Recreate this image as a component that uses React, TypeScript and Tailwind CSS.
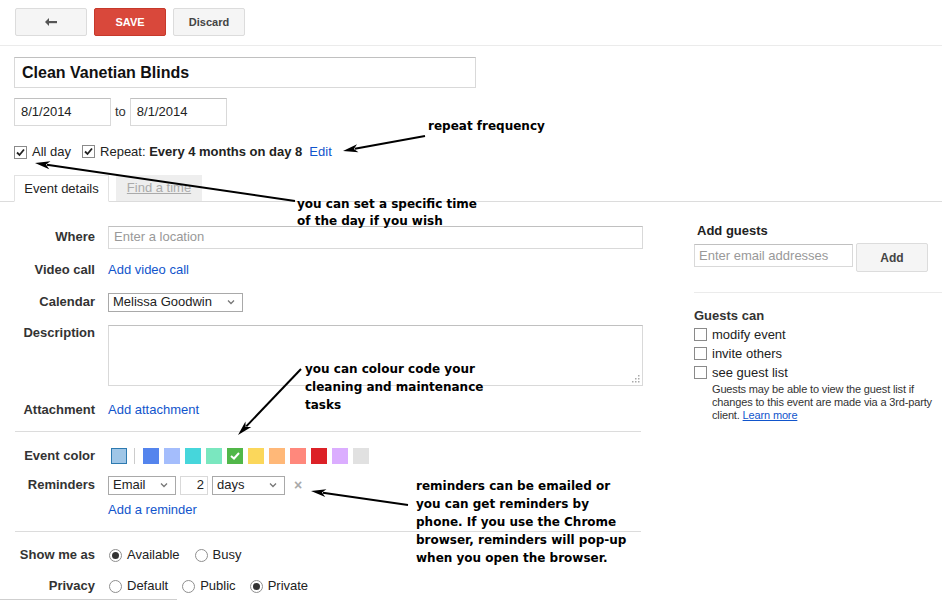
import React from "react";

const FONT = "font-['Liberation_Sans',Arial,sans-serif]";
const NOTE = "absolute font-['DejaVu_Sans',Verdana,sans-serif] font-bold text-[12px] text-black whitespace-nowrap";

const swatches = [
  "#5484ed",
  "#a4bdfc",
  "#46d6db",
  "#7ae7bf",
  "#51b749",
  "#fbd75b",
  "#ffb878",
  "#ff887c",
  "#dc2127",
  "#dbadff",
  "#e1e1e1",
];

function CheckBox({ checked }: { checked?: boolean }) {
  return (
    <span className="inline-flex h-[13px] w-[13px] items-center justify-center border border-[#8a8a8a] bg-white shrink-0">
      {checked && (
        <svg width="9" height="9" viewBox="0 0 9 9">
          <path d="M1 4.5 L3.5 7 L8 1.5" stroke="#222" strokeWidth="1.8" fill="none" />
        </svg>
      )}
    </span>
  );
}

function Radio({ on }: { on?: boolean }) {
  return (
    <span className="inline-flex h-[13px] w-[13px] items-center justify-center rounded-full border border-[#8f8f8f] bg-white shrink-0">
      {on && <span className="h-[7px] w-[7px] rounded-full bg-[#333]" />}
    </span>
  );
}

function Chevron() {
  return (
    <svg width="8" height="6" viewBox="0 0 8 6" className="shrink-0">
      <path d="M1 1.5 L4 4.5 L7 1.5" stroke="#777" strokeWidth="1.3" fill="none" />
    </svg>
  );
}

function Select({ value, w }: { value: string; w: string }) {
  return (
    <div className={`flex h-[19px] items-center justify-between border border-[#a9a9a9] bg-white pl-[4px] pr-[7px] ${w}`}>
      <span>{value}</span>
      <Chevron />
    </div>
  );
}

function Row({ label, className, children }: { label: string; className?: string; children: React.ReactNode }) {
  return (
    <div className={`flex items-center ${className ?? ""}`}>
      <div className="w-[81px] shrink-0 text-right font-bold text-[#333]">{label}</div>
      <div className="ml-[13px] flex items-center">{children}</div>
    </div>
  );
}

function Arrow({ x1, y1, x2, y2 }: { x1: number; y1: number; x2: number; y2: number }) {
  // head drawn at (x2, y2)
  const dx = x2 - x1;
  const dy = y2 - y1;
  const len = Math.sqrt(dx * dx + dy * dy);
  const ux = dx / len;
  const uy = dy / len;
  const bx = x2 - ux * 15;
  const by = y2 - uy * 15;
  const px = -uy * 4;
  const py = ux * 4;
  return (
    <g>
      <line x1={x1} y1={y1} x2={bx + ux * 3} y2={by + uy * 3} stroke="#000" strokeWidth="2" />
      <polygon points={`${x2},${y2} ${bx + px},${by + py} ${bx + ux * 4},${by + uy * 4} ${bx - px},${by - py}`} fill="#000" />
    </g>
  );
}

export default function App() {
  return (
    <div className={`relative h-[601px] w-[942px] overflow-hidden bg-white text-[13px] text-[#222] ${FONT}`}>
      {/* toolbar */}
      <div className="flex h-[46px] items-start gap-[7px] border-b border-[#ebebeb] pl-[15px] pt-[8px]">
        <button className="flex h-[28px] w-[72px] items-center justify-center rounded-[2px] border border-[#dcdcdc] bg-[#f5f5f5]">
          <svg width="14" height="10" viewBox="0 0 14 10">
            <path d="M5 1 L1 5 L5 9 Z" fill="#555" />
            <rect x="4" y="4" width="9" height="2.2" fill="#555" />
          </svg>
        </button>
        <button className="h-[28px] w-[72px] rounded-[2px] border border-[#c6392b] bg-[#d9483b] text-[11px] font-bold text-white">
          SAVE
        </button>
        <button className="h-[28px] w-[72px] rounded-[2px] border border-[#dcdcdc] bg-[#f5f5f5] text-[11px] font-bold text-[#444]">
          Discard
        </button>
      </div>

      {/* title + dates */}
      <div className="pl-[14px] pt-[11px]">
        <div className="flex h-[31px] w-[462px] items-center border border-[#d9d9d9] border-t-[#c0c0c0] pl-[7px] text-[16px] font-bold text-[#111]">
          Clean Vanetian Blinds
        </div>
        <div className="mt-[10px] flex items-center">
          <div className="flex h-[28px] w-[97px] items-center border border-[#d9d9d9] border-t-[#c0c0c0] pl-[6px]">8/1/2014</div>
          <span className="mx-[4px] text-[#333]">to</span>
          <div className="flex h-[28px] w-[97px] items-center border border-[#d9d9d9] border-t-[#c0c0c0] pl-[6px]">8/1/2014</div>
        </div>
        <div className="mt-[18px] flex h-[16px] items-center">
          <CheckBox checked />
          <span className="ml-[5px]">All day</span>
          <span className="ml-[11px]">
            <CheckBox checked />
          </span>
          <span className="ml-[5px]">
            Repeat: <span className="font-bold">Every 4 months on day 8</span>
          </span>
          <span className="ml-[7px] text-[#15c]">Edit</span>
        </div>
      </div>

      {/* tabs */}
      <div className="mt-[15px] flex h-[27px] items-end border-b border-[#dcdcdc] pl-[14px]">
        <div className="-mb-px flex h-[27px] w-[95px] items-center justify-center border border-b-white border-[#e2e2e2] bg-white text-[#222]">
          Event details
        </div>
        <div className="ml-[7px] flex h-[26px] w-[86px] items-center justify-center bg-[#eeeeee] text-[#aaa] underline">
          Find a time
        </div>
      </div>

      <div className="flex">
        {/* event form */}
        <div className="w-[680px] pl-[14px]">
          <Row label="Where" className="mt-[24px] h-[22px]">
            <div className="flex h-[23px] w-[535px] items-center border border-[#d9d9d9] border-t-[#c0c0c0] pl-[5px] text-[#999]">
              Enter a location
            </div>
          </Row>
          <Row label="Video call" className="mt-[11px] h-[22px]">
            <span className="text-[#15c]">Add video call</span>
          </Row>
          <Row label="Calendar" className="mt-[10px] h-[22px]">
            <Select value="Melissa Goodwin" w="w-[135px]" />
          </Row>
          <div className="mt-[12px] flex items-start">
            <div className="w-[81px] shrink-0 text-right font-bold leading-[15px] text-[#333]">Description</div>
            <div className="relative ml-[13px] h-[61px] w-[535px] border border-[#d9d9d9] border-t-[#c0c0c0]">
              <svg width="8" height="8" viewBox="0 0 8 8" className="absolute bottom-[2px] right-[2px]">
                <g fill="#aaa">
                  <rect x="6" y="0" width="1.5" height="1.5" />
                  <rect x="3" y="3" width="1.5" height="1.5" />
                  <rect x="6" y="3" width="1.5" height="1.5" />
                  <rect x="0" y="6" width="1.5" height="1.5" />
                  <rect x="3" y="6" width="1.5" height="1.5" />
                  <rect x="6" y="6" width="1.5" height="1.5" />
                </g>
              </svg>
            </div>
          </div>
          <Row label="Attachment" className="mt-[13px] h-[22px]">
            <span className="text-[#15c]">Add attachment</span>
          </Row>
          <div className="ml-px mt-[10px] w-[626px] border-t border-[#dcdcdc]" />
          <Row label="Event color" className="mt-[13px] h-[22px]">
            <div className="flex items-center">
              <span className="ml-[3px] h-[16px] w-[16px] border border-[#2d7ab0] bg-[#9fc6e7]" />
              <span className="ml-[7px] h-[16px] w-px bg-[#ccc]" />
              <div className="ml-[8px] flex gap-[5px]">
                {swatches.map((c, i) => (
                  <span key={c} className="flex h-[16px] w-[16px] items-center justify-center" style={{ backgroundColor: c }}>
                    {i === 4 && (
                      <svg width="10" height="8" viewBox="0 0 10 8">
                        <path d="M1 4 L4 6.5 L9 1" stroke="#fff" strokeWidth="2" fill="none" />
                      </svg>
                    )}
                  </span>
                ))}
              </div>
            </div>
          </Row>
          <Row label="Reminders" className="mt-[7px] h-[22px]">
            <Select value="Email" w="w-[68px]" />
            <div className="ml-[4px] flex h-[19px] w-[28px] items-center justify-end border border-[#d9d9d9] pr-[3px]">2</div>
            <div className="ml-[4px]">
              <Select value="days" w="w-[73px]" />
            </div>
            <span className="ml-[9px] text-[14px] font-bold text-[#aaa]">×</span>
          </Row>
          <div className="ml-[94px] mt-[3px] flex h-[22px] items-center text-[#15c]">Add a reminder</div>
          <div className="ml-px mt-[10px] w-[626px] border-t border-[#dcdcdc]" />
          <Row label="Show me as" className="mt-[12px] h-[22px]">
            <span className="ml-px flex items-center">
              <Radio on />
              <span className="ml-[5px]">Available</span>
            </span>
            <span className="ml-[15px] flex items-center">
              <Radio />
              <span className="ml-[5px]">Busy</span>
            </span>
          </Row>
          <Row label="Privacy" className="mt-[9px] h-[22px]">
            <span className="ml-px flex items-center">
              <Radio />
              <span className="ml-[5px]">Default</span>
            </span>
            <span className="ml-[14px] flex items-center">
              <Radio />
              <span className="ml-[5px]">Public</span>
            </span>
            <span className="ml-[14px] flex items-center">
              <Radio on />
              <span className="ml-[5px]">Private</span>
            </span>
          </Row>
          <div className="-ml-[14px] mt-[2px] w-[177px] border-t border-[#cfcfcf]" />
        </div>

        {/* guests panel */}
        <div className="ml-[14px] flex-1 pt-[21px]">
          <div className="pl-[3px] font-bold leading-[15px] text-[#222]">Add guests</div>
          <div className="mt-[6px] flex items-start">
            <div className="flex h-[23px] w-[159px] items-center border border-[#d9d9d9] border-t-[#c0c0c0] pl-[4px] text-[#999]">
              Enter email addresses
            </div>
            <button className="-mt-px ml-[3px] h-[29px] w-[72px] rounded-[2px] border border-[#dcdcdc] bg-[#f5f5f5] text-[12px] font-bold text-[#444]">
              Add
            </button>
          </div>
          <div className="mt-[20px] border-t border-[#ebebeb]" />
          <div className="mt-[15px] font-bold leading-[15px] text-[#333]">Guests can</div>
          <div className="mt-[4px] flex flex-col gap-[4px]">
            {["modify event", "invite others", "see guest list"].map((t) => (
              <div key={t} className="flex h-[15px] items-center">
                <CheckBox />
                <span className="ml-[5px] text-[#222]">{t}</span>
              </div>
            ))}
          </div>
          <div className="ml-[18px] mt-[3px] text-[11px] leading-[13px] tracking-[-0.15px] text-[#333]">
            Guests may be able to view the guest list if
            <br />
            changes to this event are made via a 3rd-party
            <br />
            client. <span className="text-[#15c] underline">Learn more</span>
          </div>
        </div>
      </div>

      {/* annotations */}
      <div className={`${NOTE} left-[428px] top-[118px] leading-[17px]`}>repeat frequency</div>
      <div className={`${NOTE} left-[297px] top-[196px] leading-[17px]`}>
        you can set a specific time
        <br />
        of the day if you wish
      </div>
      <div className={`${NOTE} left-[305px] top-[360px] leading-[18px]`}>
        you can colour code your
        <br />
        cleaning and maintenance
        <br />
        tasks
      </div>
      <div className={`${NOTE} left-[416px] top-[477px] leading-[18px]`}>
        reminders can be emailed or
        <br />
        you can get reminders by
        <br />
        phone. If you use the Chrome
        <br />
        browser, reminders will pop-up
        <br />
        when you open the browser.
      </div>
      <svg className="pointer-events-none absolute left-0 top-0" width="942" height="601">
        <Arrow x1={425} y1={136} x2={343} y2={151} />
        <Arrow x1={295} y1={201} x2={35} y2={163} />
        <Arrow x1={301} y1={369} x2={238} y2={435} />
        <Arrow x1={408} y1={505} x2={311} y2={491} />
      </svg>
    </div>
  );
}
